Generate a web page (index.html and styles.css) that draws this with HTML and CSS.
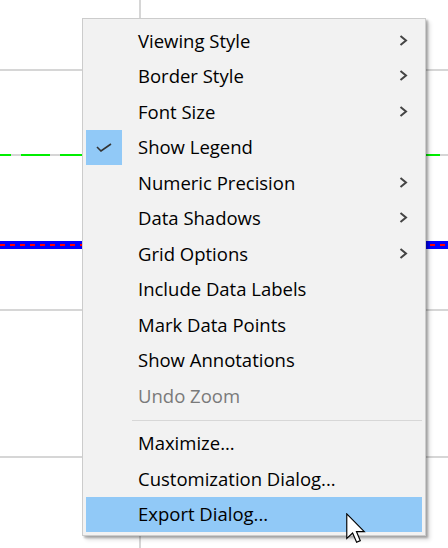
FILE: index.html
```html
<!DOCTYPE html>
<html>
<head>
<meta charset="utf-8">
<link rel="stylesheet" href="styles.css">
</head>
<body>
<div class="chart">
  <div class="vline" style="left:139px"></div>
  <div class="hline" style="top:69px"></div>
  <div class="hline" style="top:154px"></div>
  <div class="hline" style="top:244px"></div>
  <div class="hline" style="top:309px"></div>
  <div class="hline" style="top:456px"></div>
  <div class="series-green"></div>
  <div class="series-blue"><div class="series-red"></div></div>

  <div class="menu">
    <div class="item"><span class="label">Viewing Style</span><span class="arrow"></span></div>
    <div class="item"><span class="label">Border Style</span><span class="arrow"></span></div>
    <div class="item"><span class="label">Font Size</span><span class="arrow"></span></div>
    <div class="item checked"><span class="check"><svg width="16" height="9" viewBox="0 0 16 9"><path d="M1 4 L5 8 L15 1" fill="none" stroke="#333" stroke-width="1.6"/></svg></span><span class="label">Show Legend</span></div>
    <div class="item"><span class="label">Numeric Precision</span><span class="arrow"></span></div>
    <div class="item"><span class="label">Data Shadows</span><span class="arrow"></span></div>
    <div class="item"><span class="label">Grid Options</span><span class="arrow"></span></div>
    <div class="item"><span class="label">Include Data Labels</span></div>
    <div class="item"><span class="label">Mark Data Points</span></div>
    <div class="item"><span class="label">Show Annotations</span></div>
    <div class="item disabled"><span class="label">Undo Zoom</span></div>
    <div class="sep"></div>
    <div class="item"><span class="label">Maximize...</span></div>
    <div class="item"><span class="label">Customization Dialog...</span></div>
    <div class="item hover"><span class="label">Export Dialog...</span></div>
  </div>

  <svg class="cursor" width="20" height="31" viewBox="0 0 13 20">
    <path d="M0.5 0.5 L0.5 16.5 L4.3 12.9 L6.9 18.9 L9.3 17.9 L6.8 12 L11.9 12 Z" fill="#fff" stroke="#000" stroke-width="0.75" stroke-linejoin="miter"/>
  </svg>
</div>
</body>
</html>
```

FILE: styles.css
```css
html, body {
  margin: 0;
  padding: 0;
  background: #fff;
}
.chart {
  position: relative;
  width: 448px;
  height: 548px;
  overflow: hidden;
  background: #fff;
}
.vline {
  position: absolute;
  top: 0;
  bottom: 0;
  width: 2px;
  background: #d6d6d6;
}
.hline {
  position: absolute;
  left: 0;
  right: 0;
  height: 2px;
  background: #d6d6d6;
}
.series-green {
  position: absolute;
  left: 0;
  right: 0;
  top: 154px;
  height: 2px;
  background: repeating-linear-gradient(90deg, #00ee00 0 11px, transparent 11px 21px, #00ee00 21px 39px);
}
.series-blue {
  position: absolute;
  left: 0;
  right: 0;
  top: 241px;
  height: 8px;
  background: #0000ff;
  display: flex;
  align-items: center;
}
.series-red {
  width: 100%;
  height: 2px;
  background: repeating-linear-gradient(90deg, #ff0000 0 5px, transparent 5px 10px);
}
.menu {
  position: absolute;
  left: 82px;
  top: 18px;
  width: 336px;
  padding: 4px 3px 3px 3px;
  background: #f2f2f2;
  border: 1px solid #cccccc;
  box-shadow: 2px 2px 2px rgba(0,0,0,0.28), 4px 4px 4px rgba(0,0,0,0.12);
  font-family: "Open Sans", "Noto Sans", sans-serif;
  font-size: 18.5px;
  color: #000;
  display: flex;
  flex-direction: column;
}
.item {
  position: relative;
  box-sizing: border-box;
  height: 35.5px;
  display: flex;
  align-items: center;
  padding: 0 14px 1px 52px;
}
.label {
  flex: 1;
  white-space: nowrap;
}
.item.disabled .label {
  color: #7a7a7a;
}
.item.hover {
  background: #91c9f7;
}
.arrow {
  width: 9px;
  height: 11px;
  background: no-repeat center/9px 11px url("data:image/svg+xml;utf8,<svg xmlns='http://www.w3.org/2000/svg' width='9' height='11' viewBox='0 0 9 11'><path d='M1.5 1 L7 5.5 L1.5 10' fill='none' stroke='%23444' stroke-width='2'/></svg>");
}
.check {
  position: absolute;
  left: 0;
  top: 0;
  width: 36px;
  height: 35px;
  background: #91c9f7;
  display: flex;
  align-items: center;
  justify-content: center;
}
.sep {
  height: 1px;
  margin: 6px 0 5px 46px;
  background: #d7d7d7;
}
.cursor {
  position: absolute;
  left: 346px;
  top: 513px;
}
```
